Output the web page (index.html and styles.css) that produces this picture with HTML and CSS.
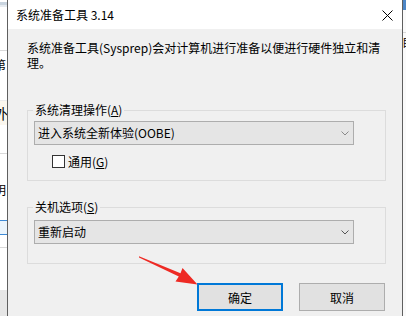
FILE: index.html
```html
<!DOCTYPE html>
<html lang="zh-CN">
<head>
<meta charset="utf-8">
<title>系统准备工具 3.14</title>
<link rel="stylesheet" href="styles.css">
</head>
<body>
<div class="screen">
  <div class="bg-left">
    <div class="band"></div>
    <div class="sp h43"></div>
    <div class="rule"></div>
    <div class="sp h7"></div>
    <div class="frag">第</div>
    <div class="sp h28"></div>
    <div class="rule light"></div>
    <div class="pale"><span class="frag2">外</span></div>
    <div class="sp h28"></div>
    <div class="rule"></div>
    <div class="sp h29"></div>
    <div class="frag">明</div>
    <div class="sp h23"></div>
    <div class="rule blue"></div>
    <div class="paleblue"></div>
    <div class="rule blue"></div>
    <div class="sp h12"></div>
    <div class="rule"></div>
    <div class="sp h42"></div>
    <div class="greyfoot"></div>
  </div>

  <div class="dialog">
    <div class="titlebar">
      <span class="title">系统准备工具 3.14</span>
      <svg class="close" width="11" height="11" viewBox="0 0 11 11"><path d="M0.5 0.5 L10.5 10.5 M10.5 0.5 L0.5 10.5" stroke="#000" stroke-width="1" fill="none"/></svg>
    </div>
    <div class="content">
      <p class="desc">系统准备工具(Sysprep)会对计算机进行准备以便进行硬件独立和清理。</p>

      <div class="group g1">
        <div class="legend"><span>系统清理操作(<u>A</u>)</span></div>
        <div class="combo">
          <span>进入系统全新体验(OOBE)</span>
          <svg width="8" height="5" viewBox="0 0 8 5"><polyline points="0.5,0.5 4,4 7.5,0.5" fill="none" stroke="#8a8a8a" stroke-width="1"/></svg>
        </div>
        <div class="check"><span class="box"></span><span>通用(<u>G</u>)</span></div>
      </div>

      <div class="group g2">
        <div class="legend"><span>关机选项(<u>S</u>)</span></div>
        <div class="combo">
          <span>重新启动</span>
          <svg width="8" height="5" viewBox="0 0 8 5"><polyline points="0.5,0.5 4,4 7.5,0.5" fill="none" stroke="#555" stroke-width="1"/></svg>
        </div>
      </div>

      <div class="buttons">
        <button class="btn default">确定</button>
        <button class="btn">取消</button>
      </div>
    </div>
  </div>

  <div class="bg-right">
    <div class="rband"></div>
    <div class="sp h22"></div>
    <div class="rule"></div>
    <div class="sp h3"></div>
    <div class="rfrag">眼</div>
  </div>

  <svg class="arrow" width="406" height="316" viewBox="0 0 406 316">
    <polygon points="139,256.2 180.5,273.3 182.5,268 197.5,284.5 175.5,281.5 178.8,276.6 139,257.6" fill="#ee2a24"/>
  </svg>
</div>
</body>
</html>
```

FILE: styles.css
```css
* { box-sizing: border-box; }

html, body {
  margin: 0;
  padding: 0;
}

body {
  width: 406px;
  height: 316px;
  overflow: hidden;
  background: #ffffff;
  font-family: "Noto Sans CJK SC", "Microsoft YaHei", sans-serif;
  font-size: 12px;
  color: #000;
}

.screen {
  position: relative;
  display: flex;
  width: 406px;
  height: 316px;
  overflow: hidden;
}

/* background window fragments */
.bg-left {
  flex: none;
  width: 7px;
  height: 316px;
  display: flex;
  flex-direction: column;
  overflow: hidden;
  background: #fff;
}
.band {
  height: 7px;
  flex: none;
  background: linear-gradient(#ffffff 0 2px, #c9d4df 2px 5px, #e6ebf0 5px);
}
.sp { flex: none; }
.h3 { height: 3px; }
.h7 { height: 7px; }
.h12 { height: 12px; }
.h22 { height: 22px; }
.h23 { height: 23px; }
.h28 { height: 28px; }
.h29 { height: 29px; }
.h42 { height: 42px; }
.h43 { height: 43px; }
.rule { flex: none; height: 1px; background: #d9d9d9; }
.rule.light { background: #ececec; }
.rule.blue { background: #3e8ad6; }
.frag {
  flex: none;
  height: 14px;
  line-height: 14px;
  margin-left: -6px;
  white-space: nowrap;
}
.pale {
  flex: none;
  height: 24px;
  background: #fbf7ee;
  line-height: 24px;
  white-space: nowrap;
}
.frag2 { margin-left: -6px; font-size: 14px; }
.paleblue { flex: none; height: 13px; background: #eaf4fc; }
.greyfoot { flex: 1; background: #e6e6e6; }

.bg-right {
  flex: none;
  width: 3px;
  height: 316px;
  display: flex;
  flex-direction: column;
  overflow: hidden;
  background: #fafafa;
}
.rband { flex: none; height: 10px; background: #4d86c6; }
.rfrag {
  flex: none;
  height: 14px;
  line-height: 14px;
  white-space: nowrap;
}

/* dialog */
.dialog {
  flex: none;
  width: 396px;
  height: 316px;
  border-left: 1px solid #5f5f5f;
  border-right: 1px solid #5f5f5f;
  background: #f0f0f0;
  display: flex;
  flex-direction: column;
}

.titlebar {
  flex: none;
  height: 29px;
  background: #ffffff;
  display: flex;
  align-items: center;
  justify-content: space-between;
  padding: 0 9px 0 8px;
}
.title {
  font-size: 12px;
  line-height: 14px;
}
.close { display: block; margin-top: 1px; }

.content {
  padding: 11px 16px 0 19px;
  display: flex;
  flex-direction: column;
}

.desc {
  margin: 0;
  line-height: 15px;
  width: 359px;
}

.group {
  border: 1px solid #dcdcdc;
  display: flex;
  flex-direction: column;
  align-items: flex-start;
}
.g1 { margin-top: 40px; padding-bottom: 12px; }
.g2 { margin-top: 26px; padding-bottom: 19px; }

.legend {
  margin-top: -8px;
  margin-left: 5px;
  height: 14px;
  line-height: 14px;
}
.legend span {
  background: #f0f0f0;
  padding: 0 2px;
}

.combo {
  margin-left: 6px;
  width: 320px;
  height: 24px;
  border: 1px solid #adadad;
  background: #e5e5e5;
  display: flex;
  align-items: center;
  justify-content: space-between;
  padding: 0 4px 0 3px;
  line-height: 14px;
}
.g1 .combo { margin-top: 4px; }
.g2 .combo { margin-top: 6px; }

.check {
  margin-top: 10px;
  margin-left: 24px;
  height: 13px;
  display: flex;
  align-items: center;
  line-height: 13px;
}
.box {
  width: 13px;
  height: 13px;
  border: 1px solid #333;
  background: #fff;
  margin-right: 3px;
}

.buttons {
  margin-top: 19px;
  margin-right: 1px;
  display: flex;
  justify-content: flex-end;
  gap: 16px;
}
.btn {
  width: 86px;
  height: 28px;
  border: 1px solid #adadad;
  background: #e1e1e1;
  font-family: inherit;
  font-size: 12px;
  color: #000;
  padding: 0;
  margin: 0;
}
.btn.default {
  border: 2px solid #0078d7;
}

.arrow {
  position: absolute;
  left: 0;
  top: 0;
  pointer-events: none;
}
```
